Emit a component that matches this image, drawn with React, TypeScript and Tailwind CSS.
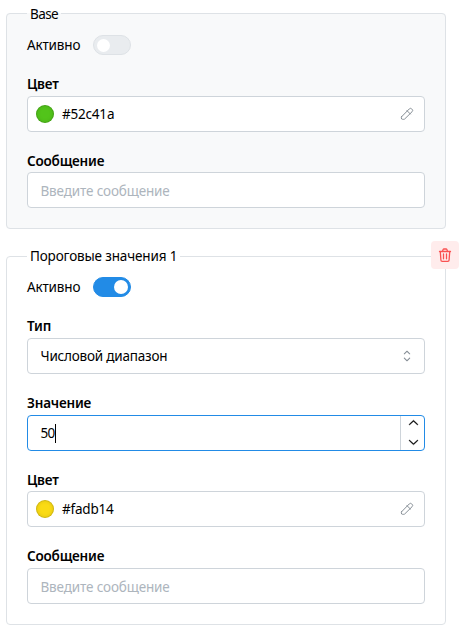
import { useState } from 'react';
import type { ReactNode } from 'react';
import { RxCaretSort, RxChevronDown, RxChevronUp } from 'react-icons/rx';

const inputBox = 'flex h-9 items-center rounded-[4px] border border-[#ced4da] bg-white';

function Toggle({ initial }: { initial: boolean }) {
  const [checked, setChecked] = useState(initial);

  return (
    <div className="flex h-5 items-center">
      <span className="w-[66px] tracking-[-0.15px]">Активно</span>
      <button
        type="button"
        role="switch"
        aria-checked={checked}
        onClick={() => setChecked(!checked)}
        className={`flex h-5 w-[38px] items-center rounded-full border ${
          checked ? 'justify-end border-[#228be6] bg-[#228be6] px-[2px]' : 'justify-start border-[#dee2e6] bg-[#e9ecef] px-[3px]'
        }`}
      >
        <span className={`rounded-full bg-white ${checked ? 'size-[14px]' : 'size-[13px]'}`} />
      </button>
    </div>
  );
}

function Field({ label, tight, children }: { label: string; tight?: boolean; children: ReactNode }) {
  return (
    <div className="mt-5">
      <div className={`leading-[18px] font-semibold ${tight ? 'h-5' : 'h-[21px]'}`}>{label}</div>
      {children}
    </div>
  );
}

function ColorInput({ value }: { value: string }) {
  return (
    <div className={`${inputBox} pr-[9px] pl-2`}>
      <span
        className="size-[18px] rounded-full shadow-[inset_0_0_0_1px_rgba(0,0,0,0.1),inset_0_0_4px_rgba(0,0,0,0.15)]"
        style={{ backgroundColor: value }}
      />
      <span className="ml-2 flex-1">{value}</span>
      <svg
        viewBox="0 0 24 24"
        className="size-4 text-[#868e96]"
        fill="none"
        stroke="currentColor"
        strokeWidth="1.5"
        strokeLinecap="round"
        strokeLinejoin="round"
      >
        <path d="M12 7l5 5" />
        <path d="M4.500 15.500L15.500 4.300a2.500 2.500 0 0 1 3.500 0l.7 .7a2.500 2.500 0 0 1 0 3.500L8.500 19.500a2 2 0 0 1 -1.400 .5h-1.600a2 2 0 0 1 -2 -2v-1.200a2 2 0 0 1 .5 -1.300z" />
      </svg>
    </div>
  );
}

function MessageInput() {
  return (
    <input
      placeholder="Введите сообщение"
      className="block h-9 w-full rounded-[4px] border border-[#ced4da] bg-white px-[12.5px] pt-0.5 tracking-[-0.15px] outline-none placeholder:text-[#adb5bd]"
    />
  );
}

function NumberInput({ value }: { value: number }) {
  return (
    <div className="flex h-9 rounded-[4px] border border-[#228be6] bg-white">
      <div className="flex flex-1 items-center pl-[12.5px] tracking-[-0.6px]">
        {value}
        <span className="h-[19px] w-px bg-black" />
      </div>
      <div className="flex w-6 flex-col items-center justify-between border-l border-[#ced4da] pb-px pl-px">
        <RxChevronUp size={15} className="stroke-current stroke-[0.3]" />
        <RxChevronDown size={15} className="stroke-current stroke-[0.3]" />
      </div>
    </div>
  );
}

export default function App() {
  return (
    <div className="h-[629px] w-[462px] bg-white pt-[3px] pl-[6px] font-['Noto_Sans',sans-serif] text-[13.5px] leading-[21px] tracking-[-0.2px] text-black">
      <fieldset className="w-[440px] rounded-[4px] border border-[#dee2e6] bg-[#f8f9fa] px-5 pb-5">
        <legend className="h-[21px] px-[3px] leading-[22px] tracking-[-0.6px]">Base</legend>
        <div className="pt-[11px]">
          <Toggle initial={false} />
          <Field label="Цвет">
            <ColorInput value="#52c41a" />
          </Field>
          <Field label="Сообщение" tight>
            <MessageInput />
          </Field>
        </div>
      </fieldset>

      <div className="relative mt-[17px] w-[440px]">
        <fieldset className="rounded-[4px] border border-[#dee2e6] px-5 pb-5">
          <legend className="h-[21px] px-[3px] leading-[21px] tracking-[-0.15px]">Пороговые значения 1</legend>
          <div className="pt-[10px]">
            <Toggle initial={true} />
            <Field label="Тип">
              <div className={`${inputBox} justify-between pr-2 pl-[12.5px]`}>
                <span>Числовой диапазон</span>
                <RxCaretSort size={18} className="text-[#868e96]" />
              </div>
            </Field>
            <Field label="Значение">
              <NumberInput value={50} />
            </Field>
            <Field label="Цвет" tight>
              <ColorInput value="#fadb14" />
            </Field>
            <Field label="Сообщение">
              <MessageInput />
            </Field>
          </div>
        </fieldset>

        {/* Sits over the corner of the threshold group */}
        <button
          type="button"
          aria-label="Удалить"
          className="absolute -top-[5px] -right-[13px] flex size-7 items-center justify-center rounded-[4px] bg-[#ffecec] text-[#fa5252]"
        >
          <svg
            viewBox="0 0 14 14"
            className="size-[14px]"
            fill="none"
            stroke="currentColor"
            strokeWidth="1.3"
            strokeLinecap="round"
            strokeLinejoin="round"
          >
            <path d="M1.500 3.500h11" />
            <path d="M4.500 3.300l.6 -1.700a1 1 0 0 1 .9 -.6h2a1 1 0 0 1 .9 .6l.6 1.700" />
            <path d="M2.300 3.700l.6 8.300a1.300 1.300 0 0 0 1.300 1.300h5.600a1.300 1.300 0 0 0 1.300 -1.300l.6 -8.300" />
            <path d="M5.500 6v4.800M8.500 6v4.800" />
          </svg>
        </button>
      </div>
    </div>
  );
}
